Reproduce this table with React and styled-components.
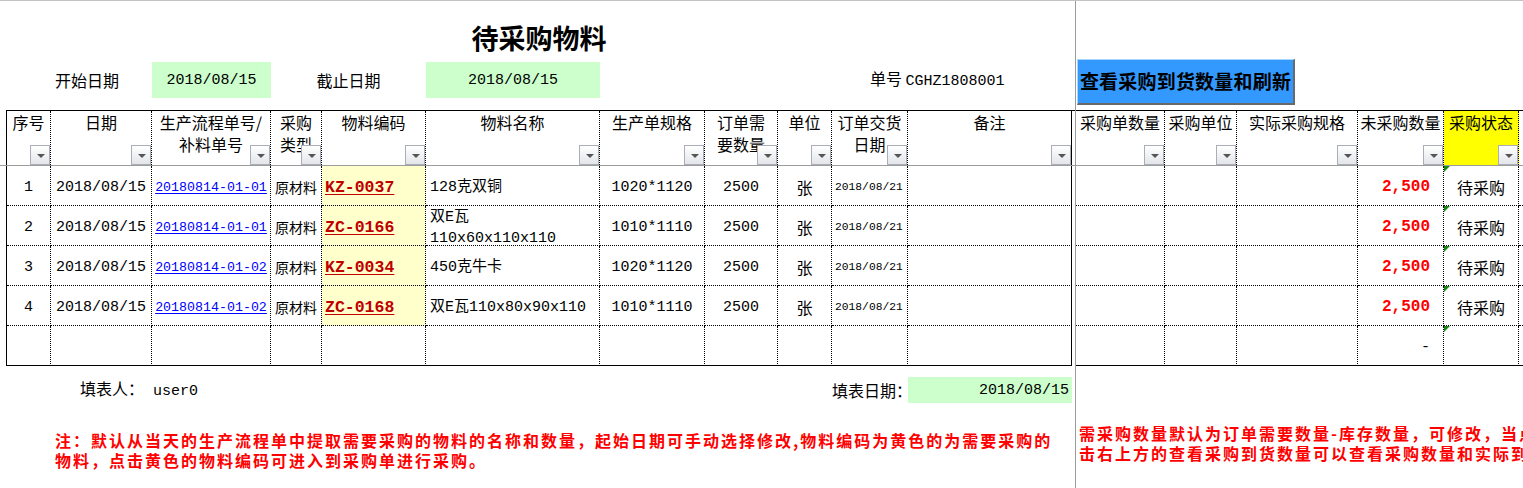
import React from 'react';
import styled, { createGlobalStyle } from 'styled-components';

const MONO = '"Liberation Mono", "Noto Sans CJK SC", monospace';
const CJK = '"Noto Sans CJK SC", "Liberation Sans", sans-serif';

// column widths measured from the sheet grid lines (border included)
const LEFT_COLS = '44px 101px 119px 51px 104px 174px 105px 73px 54px 76px 164px';
const RIGHT_COLS = '89px 72px 121px 86px 75px 1fr';

const leftHeads = [
  ['序号'], ['日期'], ['生产流程单号/', '补料单号'], ['采购', '类型'], ['物料编码'],
  ['物料名称'], ['生产单规格'], ['订单需', '要数量'], ['单位'], ['订单交货', '日期'], ['备注'],
];

const rightHeads = ['采购单数量', '采购单位', '实际采购规格', '未采购数量', '采购状态'];

const rows = [
  { no: 1, flow: '20180814-01-01', code: 'KZ-0037', name: ['128克双铜'], spec: '1020*1120' },
  { no: 2, flow: '20180814-01-01', code: 'ZC-0166', name: ['双E瓦', '110x60x110x110'], spec: '1010*1110' },
  { no: 3, flow: '20180814-01-02', code: 'KZ-0034', name: ['450克牛卡'], spec: '1020*1120' },
  { no: 4, flow: '20180814-01-02', code: 'ZC-0168', name: ['双E瓦110x80x90x110'], spec: '1010*1110' },
];

const GlobalStyle = createGlobalStyle`
  html, body { margin: 0; padding: 0; background: #fff; overflow: hidden; }
  body { font-family: ${MONO}; color: #000; }
  * { box-sizing: border-box; }
`;

const Sheet = styled.div`
  display: grid;
  grid-template-columns: 1075px 1px 1fr;
  height: 488px;
  border-top: 1px solid #c3c3c3;
  overflow: hidden;
`;

const Pane = styled.section`
  display: flex;
  flex-direction: column;
  min-width: 0;
  overflow: hidden;
`;

const FreezeLine = styled.div`
  background: #9c9c9c;
`;

const TopArea = styled.div`
  flex: none;
  height: 109px;
  display: flex;
  flex-direction: column;
  align-items: flex-start;
  padding: ${p => (p.$right ? '58px 0 0 1px' : '19px 0 0 6px')};
`;

const Title = styled.h1`
  margin: 0;
  width: 1066px;
  height: 36px;
  line-height: 36px;
  text-align: center;
  font-family: ${CJK};
  font-size: 27px;
  font-weight: 700;
`;

const InfoRow = styled.div`
  display: grid;
  grid-template-columns: ${LEFT_COLS};
  align-items: center;
  width: 1067px;
  height: ${p => p.$h}px;
  margin-top: ${p => p.$top}px;
  padding-left: 1px;
`;

const Label = styled.div`
  grid-column: ${p => p.$col};
  text-align: ${p => p.$align || 'left'};
  padding: ${p => p.$pad || '0'};
  font-family: ${CJK};
  font-size: 16px;
  line-height: 22px;
  white-space: nowrap;
`;

const Num = styled.span`
  font-family: ${MONO};
  font-size: 15px;
`;

const DateBox = styled.div`
  grid-column: ${p => p.$col};
  align-self: stretch;
  display: flex;
  align-items: center;
  justify-content: ${p => (p.$align === 'right' ? 'flex-end' : 'center')};
  padding: 0 3px;
  background: #ccffcc;
  font-size: 15px;
`;

const ActionButton = styled.button`
  display: flex;
  align-items: center;
  justify-content: center;
  width: 218px;
  height: 46px;
  padding: 0 0 1px;
  background: #3399ff;
  border-style: solid;
  border-width: 1px 2px 2px 1px;
  border-color: #a9d4ff #6a6a6a #6a6a6a #a9d4ff;
  color: #000;
  overflow: hidden;
`;

const ButtonText = styled.span`
  font-family: ${CJK};
  font-size: 19px;
  font-weight: 700;
  line-height: 24px;
  letter-spacing: 0.2px;
  white-space: nowrap;
`;

const Band = styled.div`
  flex: none;
  padding-left: ${p => p.$inset || 0}px;
  border-bottom: ${p => (p.$freeze ? '1px solid #9c9c9c' : 'none')};
`;

const TableGrid = styled.div`
  display: grid;
  grid-template-columns: ${p => p.$cols};
  border-left: ${p => (p.$edge ? '1px solid #000' : 'none')};
  border-top: ${p => (p.$top ? '1px solid #000' : 'none')};
`;

const HeadCell = styled.div`
  position: relative;
  height: 54px;
  border-right: ${p => (p.$open ? 'none' : `1px ${p.$last ? 'solid' : 'dotted'} #000`)};
  background: ${p => p.$fill || 'transparent'};
  font-family: ${CJK};
  font-size: 16px;
  line-height: 22px;
  text-align: center;
  white-space: nowrap;
  overflow: hidden;
`;

const FilterButton = styled.span`
  position: absolute;
  right: 0;
  bottom: 0;
  width: 20px;
  height: 20px;
  border: 1px solid #a9aeb8;
  background: linear-gradient(#ffffff, #e3e5ea);

  &::after {
    content: '';
    position: absolute;
    left: 6px;
    top: 8px;
    border-left: 4px solid transparent;
    border-right: 4px solid transparent;
    border-top: 4px solid #555;
  }
`;

const BodyCell = styled.div`
  position: relative;
  height: 40px;
  display: flex;
  align-items: center;
  justify-content: ${p => (p.$align === 'left' ? 'flex-start' : p.$align === 'right' ? 'flex-end' : 'center')};
  padding: 4px ${p => p.$padR || 0}px 0 ${p => p.$padL || 0}px;
  border-right: ${p => (p.$open ? 'none' : `1px ${p.$last ? 'solid' : 'dotted'} #000`)};
  border-bottom: 1px ${p => (p.$lastRow ? 'solid' : 'dotted')} #000;
  background: ${p => p.$fill || 'transparent'};
  font-size: 15px;
  line-height: 21px;
  white-space: nowrap;

  ${p => p.$flag && `
    &::before {
      content: '';
      position: absolute;
      top: 0;
      left: 0;
      border-top: 6px solid #128a12;
      border-right: 6px solid transparent;
    }
  `}
`;

const Cjk = styled.span`
  font-family: ${CJK};
  font-size: ${p => p.$size || 16}px;
`;

const FlowLink = styled.a`
  color: #0000ff;
  font-size: 13.3px;
  text-decoration: underline;
  text-underline-offset: 2px;
`;

const Code = styled.a`
  color: #c00000;
  font-size: 16.5px;
  font-weight: 700;
  text-decoration: underline;
  text-underline-offset: 2px;
`;

const Name = styled.span`
  display: block;
  font-size: 15px;
  line-height: 21px;
`;

const Due = styled.span`
  font-size: 11.3px;
`;

const Qty = styled.span`
  color: #ff0000;
  font-size: 16px;
  font-weight: 700;
`;

const Note = styled.p`
  margin: ${p => p.$top}px 0 0;
  padding-left: ${p => p.$indent}px;
  color: #ff0000;
  font-family: ${CJK};
  font-size: 16px;
  font-weight: 700;
  line-height: ${p => p.$lh}px;
  letter-spacing: 2px;
  white-space: nowrap;
`;

const lines = parts => parts.map((t, i) => (
  <React.Fragment key={i}>{i > 0 && <br />}{t}</React.Fragment>
));

const LeftRow = ({ row, lastRow }) => {
  const filled = !!row;
  return (
    <>
      <BodyCell $lastRow={lastRow}>{filled && row.no}</BodyCell>
      <BodyCell $lastRow={lastRow}>{filled && '2018/08/15'}</BodyCell>
      <BodyCell $lastRow={lastRow}>{filled && <FlowLink>{row.flow}</FlowLink>}</BodyCell>
      <BodyCell $lastRow={lastRow}>{filled && <Cjk $size={14}>原材料</Cjk>}</BodyCell>
      <BodyCell $lastRow={lastRow} $align="left" $padL={3} $fill={filled ? '#ffffcc' : null}>
        {filled && <Code>{row.code}</Code>}
      </BodyCell>
      <BodyCell $lastRow={lastRow} $align="left" $padL={4}>
        {filled && <Name>{lines(row.name)}</Name>}
      </BodyCell>
      <BodyCell $lastRow={lastRow}>{filled && row.spec}</BodyCell>
      <BodyCell $lastRow={lastRow}>{filled && '2500'}</BodyCell>
      <BodyCell $lastRow={lastRow}>{filled && <Cjk>张</Cjk>}</BodyCell>
      <BodyCell $lastRow={lastRow} $align="left" $padL={3}>{filled && <Due>2018/08/21</Due>}</BodyCell>
      <BodyCell $lastRow={lastRow} $last />
    </>
  );
};

const RightRow = ({ filled, lastRow }) => (
  <>
    <BodyCell $lastRow={lastRow} />
    <BodyCell $lastRow={lastRow} />
    <BodyCell $lastRow={lastRow} />
    <BodyCell $lastRow={lastRow} $align="right" $padR={13}>
      {filled ? <Qty>2,500</Qty> : '-'}
    </BodyCell>
    <BodyCell $lastRow={lastRow} $flag>{filled && <Cjk>待采购</Cjk>}</BodyCell>
    <BodyCell $lastRow={lastRow} $open />
  </>
);

const App = () => {
  const bodyRows = [...rows, null];
  return (
    <>
      <GlobalStyle />
      <Sheet>
        <Pane>
          <TopArea>
            <Title>待采购物料</Title>
            <InfoRow $h={36} $top={6}>
              <Label $col="1 / 3" $pad="0 0 0 48px">开始日期</Label>
              <DateBox $col="3">2018/08/15</DateBox>
              <Label $col="4 / 6" $align="center">截止日期</Label>
              <DateBox $col="6">2018/08/15</DateBox>
              <Label $col="10 / 12" $pad="0 0 0 38px">单号 <Num>CGHZ1808001</Num></Label>
            </InfoRow>
          </TopArea>

          <Band $inset={6} $freeze>
            <TableGrid $cols={LEFT_COLS} $edge $top>
              {leftHeads.map((h, i) => (
                <HeadCell key={i} $last={i === leftHeads.length - 1}>
                  {lines(h)}
                  <FilterButton />
                </HeadCell>
              ))}
            </TableGrid>
          </Band>

          <Band $inset={6}>
            <TableGrid $cols={LEFT_COLS} $edge>
              {bodyRows.map((row, i) => (
                <LeftRow key={i} row={row} lastRow={i === bodyRows.length - 1} />
              ))}
            </TableGrid>
          </Band>

          <Band $inset={6}>
            <InfoRow $h={26} $top={11}>
              <Label $col="1 / 5" $pad="0 0 0 73px">填表人：<Num> user0</Num></Label>
              <Label $col="10" $align="right" $pad="0 8px 0 0">填表日期：</Label>
              <DateBox $col="11" $align="right">2018/08/15</DateBox>
            </InfoRow>
            <Note $top={27} $indent={49} $lh={20}>
              注：默认从当天的生产流程单中提取需要采购的物料的名称和数量，起始日期可手动选择修改,物料编码为黄色的为需要采购的
              <br />
              物料，点击黄色的物料编码可进入到采购单进行采购。
            </Note>
          </Band>
        </Pane>

        <FreezeLine />

        <Pane>
          <TopArea $right>
            <ActionButton>
              <ButtonText>查看采购到货数量和刷新</ButtonText>
            </ActionButton>
          </TopArea>

          <Band $freeze>
            <TableGrid $cols={RIGHT_COLS} $top>
              {rightHeads.map((h, i) => (
                <HeadCell key={h} $fill={i === 4 ? '#ffff00' : null}>
                  {h}
                  <FilterButton />
                </HeadCell>
              ))}
              <HeadCell $open />
            </TableGrid>
          </Band>

          <Band>
            <TableGrid $cols={RIGHT_COLS}>
              {bodyRows.map((row, i) => (
                <RightRow key={i} filled={!!row} lastRow={i === bodyRows.length - 1} />
              ))}
            </TableGrid>
          </Band>

          <Band>
            <Note $top={57} $indent={3} $lh={20}>
              需采购数量默认为订单需要数量-库存数量，可修改，当点
              <br />
              击右上方的查看采购到货数量可以查看采购数量和实际到货数量
            </Note>
          </Band>
        </Pane>
      </Sheet>
    </>
  );
};

export default App;
